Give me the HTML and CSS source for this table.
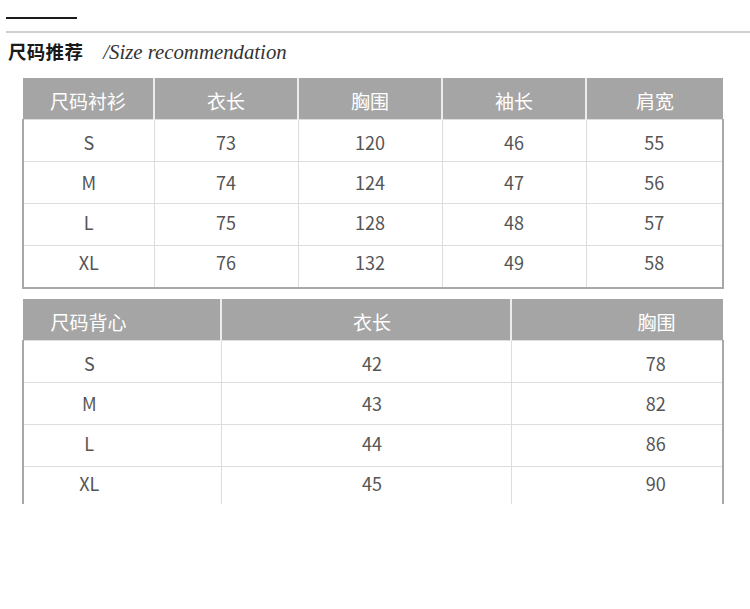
FILE: index.html
```html
<!DOCTYPE html>
<html lang="zh">
<head>
<meta charset="utf-8">
<link rel="stylesheet" href="styles.css">
</head>
<body>
<div class="page">
  <div class="rule-short"></div>
  <div class="rule-long"></div>
  <div class="title">
    <span class="title-cn">尺码推荐</span>
    <span class="title-en">/Size recommendation</span>
  </div>

  <table class="size t1">
    <colgroup>
      <col class="c1"><col class="c2"><col class="c3"><col class="c4"><col class="c5">
    </colgroup>
    <thead>
      <tr><th>尺码衬衫</th><th>衣长</th><th>胸围</th><th>袖长</th><th>肩宽</th></tr>
    </thead>
    <tbody>
      <tr><td>S</td><td>73</td><td>120</td><td>46</td><td>55</td></tr>
      <tr><td>M</td><td>74</td><td>124</td><td>47</td><td>56</td></tr>
      <tr><td>L</td><td>75</td><td>128</td><td>48</td><td>57</td></tr>
      <tr><td>XL</td><td>76</td><td>132</td><td>49</td><td>58</td></tr>
    </tbody>
  </table>

  <div class="clip">
    <table class="size t2">
      <colgroup>
        <col class="d1"><col class="d2"><col class="d3">
      </colgroup>
      <thead>
        <tr><th class="a1">尺码背心</th><th class="a2">衣长</th><th class="a3">胸围</th></tr>
      </thead>
      <tbody>
        <tr><td class="a1">S</td><td class="a2">42</td><td class="a3">78</td></tr>
        <tr><td class="a1">M</td><td class="a2">43</td><td class="a3">82</td></tr>
        <tr><td class="a1">L</td><td class="a2">44</td><td class="a3">86</td></tr>
        <tr><td class="a1">XL</td><td class="a2">45</td><td class="a3">90</td></tr>
      </tbody>
    </table>
  </div>
</div>
</body>
</html>
```

FILE: styles.css
```css
html, body {
  margin: 0;
  padding: 0;
  background: #ffffff;
}

.page {
  width: 750px;
  height: 609px;
  font-family: "Noto Sans CJK SC", "Noto Sans", sans-serif;
  color: #4a4a4a;
}

.rule-short {
  margin: 17px 0 0 6px;
  width: 71px;
  height: 2px;
  background: #1a1a1a;
}

.rule-long {
  margin: 12px 0 0 6px;
  width: 744px;
  height: 2px;
  background: #cfcfcf;
}

.title {
  display: flex;
  align-items: baseline;
  height: 45px;
  padding-left: 8px;
  line-height: 36px;
}

.title-cn {
  font-family: "Noto Sans CJK SC", sans-serif;
  font-weight: 700;
  font-size: 18.5px;
  color: #1a1a1a;
  letter-spacing: 0.3px;
}

.title-en {
  margin-left: 20px;
  font-family: "Liberation Serif", serif;
  font-style: italic;
  font-size: 20.8px;
  color: #333333;
}

.size {
  margin-left: 22px;
  width: 700px;
  border-collapse: collapse;
  table-layout: fixed;
}

.size th {
  height: 36px;
  padding: 5px 0 0;
  line-height: 24px;
  background: #a5a5a5;
  color: #ffffff;
  font-weight: 400;
  font-size: 19px;
  text-align: center;
  border-right: 2px solid #ececec;
}

.size th:last-child {
  border-right: 0;
}

.size td {
  height: 38px;
  padding: 3px 0 0;
  line-height: 24px;
  text-align: center;
  font-size: 18px;
  font-weight: 400;
  color: #555555;
  border-top: 1px solid #dedede;
  border-right: 1px solid #dedede;
}

.size tbody tr:nth-child(2) td {
  height: 38px;
  padding-top: 1px;
  padding-bottom: 2px;
}

.size tbody tr:nth-child(3) td {
  height: 36px;
  padding-top: 0;
  padding-bottom: 5px;
}

.size tbody tr:nth-child(4) td {
  height: 32px;
  padding-top: 0;
  padding-bottom: 9px;
}

.size td:first-child {
  border-left: 2px solid #a8a8a8;
}

.size td:last-child {
  border-right: 2px solid #a8a8a8;
}

.t1 tbody tr:last-child td {
  border-bottom: 2px solid #a8a8a8;
}

.c1 { width: 131px; }
.c2 { width: 144px; }
.c3 { width: 144px; }
.c4 { width: 144px; }
.c5 { width: 137px; }

.clip {
  margin-top: 10px;
  height: 205px;
  overflow: hidden;
}

.d1 { width: 198px; }
.d2 { width: 290px; }
.d3 { width: 212px; }

.t2 .a1 {
  padding-right: 66px;
}

.t2 .a2 {
  padding-left: 12px;
}

.t2 .a3 {
  padding-left: 78px;
}
```
